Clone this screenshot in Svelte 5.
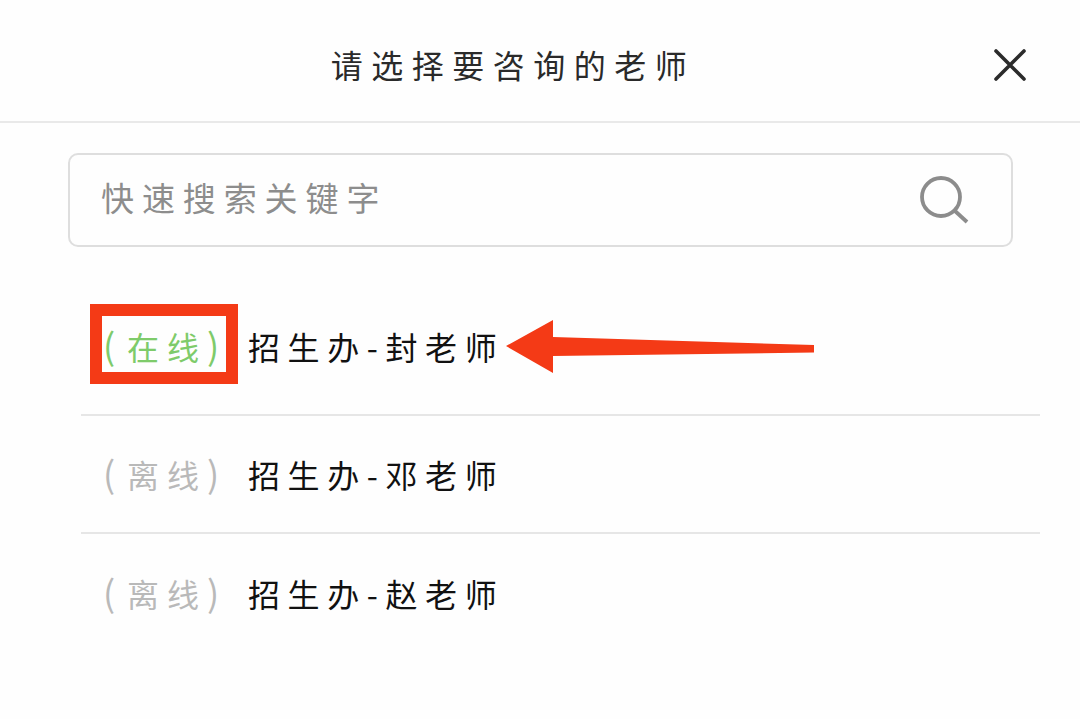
<script>
  const teachers = [
    { status: '在线', online: true, name: '招生办-封老师' },
    { status: '离线', online: false, name: '招生办-邓老师' },
    { status: '离线', online: false, name: '招生办-赵老师' }
  ];
</script>

<main class="sheet">
  <header class="head">
    <h1>请选择要咨询的老师</h1>
    <button class="close" aria-label="关闭">
      <svg width="32" height="32" viewBox="0 0 32 32"><path d="M2 2 L30 30 M30 2 L2 30" stroke="#2b2b2b" stroke-width="3.6" stroke-linecap="round" fill="none" /></svg>
    </button>
  </header>

  <div class="search">
    <span class="placeholder">快速搜索关键字</span>
    <svg width="50" height="48" viewBox="0 0 50 48"><circle cx="21" cy="21" r="19" stroke="#8c8c8c" stroke-width="3.8" fill="none" /><path d="M35 35 L47 46" stroke="#8c8c8c" stroke-width="3.8" fill="none" /></svg>
  </div>

  <ul class="list">
    {#each teachers as t, i}
      <li class="row">
        <span class="status" class:online={t.online}>
          <span class="paren l">(</span>{t.status}<span class="paren r">)</span>
          {#if i === 0}<span class="mark"></span>{/if}
        </span>
        <span class="name">{t.name}</span>
        {#if i === 0}
          <svg class="arrow" width="310" height="56" viewBox="0 0 310 56"><path d="M0 26 L47 0 L47 17 L308 25 L308 32.5 L47 36 L47 53 Z" fill="#f43a16" /></svg>
        {/if}
      </li>
    {/each}
  </ul>
</main>

<style>
  :global(body) {
    margin: 0;
    background: #fff;
  }
  .sheet {
    width: 1080px;
    height: 719px;
    overflow: hidden;
    background: #fefefe;
    font-family: "Noto Sans CJK SC", "Noto Sans", sans-serif;
    font-weight: 400;
  }
  .head {
    height: 121px;
    border-bottom: 2px solid #e9e9e9;
    display: flex;
    align-items: center;
    justify-content: center;
    position: relative;
  }
  h1 {
    margin: 6px 54px 0 0;
    font-size: 32px;
    font-weight: 400;
    letter-spacing: 8.5px;
    color: #2a2a2a;
    line-height: 44px;
  }
  .close {
    position: absolute;
    left: 994px;
    top: 49px;
    width: 32px;
    height: 32px;
    padding: 0;
    border: 0;
    background: none;
    display: block;
  }
  .close svg { display: block; }
  .search {
    margin: 30px 67px 0 68px;
    height: 90px;
    border: 2px solid #dedede;
    border-radius: 10px;
    display: flex;
    align-items: center;
    justify-content: space-between;
    padding: 0 41px 0 33px;
  }
  .placeholder {
    font-size: 33px;
    letter-spacing: 7.9px;
    color: #8d8d8d;
    line-height: 44px;
    margin: -6px 0 0 -2px;
  }
  .list {
    list-style: none;
    margin: 51px 40px 0 81px;
    padding: 0;
  }
  .row {
    height: 116px;
    border-bottom: 2px solid #e6e6e6;
    display: flex;
    align-items: flex-start;
    position: relative;
    font-size: 32px;
    line-height: 44px;
  }
  .row:last-child { border-bottom: 0; }
  .status {
    position: relative;
    margin: 30px 0 0 22px;
    width: 145px;
    letter-spacing: 8px;
    color: #b9b9b9;
    white-space: nowrap;
  }
  .status.online { color: #7ecb6a; }
  .paren { font-size: 36px; letter-spacing: 0; display: inline-block; width: 24px; line-height: 36px; }
  .paren.l { text-align: left; }
  .mark {
    position: absolute;
    left: -13px;
    top: -20px;
    width: 124px;
    height: 56px;
    border: 12px solid #f43a16;
  }
  .name {
    margin-top: 30px;
    letter-spacing: 7.6px;
    color: #111;
    white-space: nowrap;
  }
  .row:nth-child(1) .status,
  .row:nth-child(1) .name { margin-top: 26px; }
  .row:nth-child(2) .status,
  .row:nth-child(2) .name { margin-top: 36px; }
  .row:nth-child(3) .status,
  .row:nth-child(3) .name { margin-top: 37px; }
  .arrow {
    position: absolute;
    left: 425px;
    top: 22px;
  }
</style>
